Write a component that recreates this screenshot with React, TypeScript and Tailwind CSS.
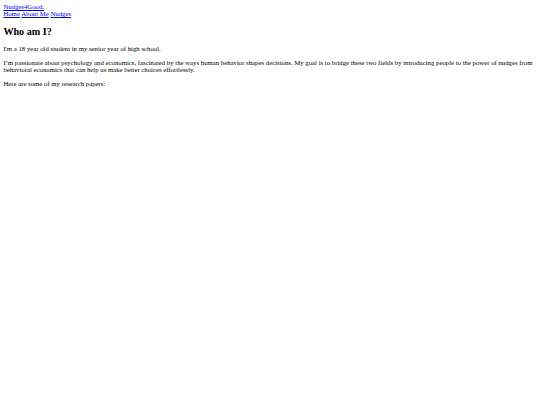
export default function App() {
  return (
    <div className="[zoom:0.421875] min-h-screen bg-white p-[8px] font-['Liberation_Serif','Times_New_Roman',serif] text-[16px] leading-[normal] text-black">
      {/* Header */}
      <header>
        <div>
          <a href="#" className="text-[#0000ee] underline">Nudges4Good.</a>
        </div>
        <nav>
          <a href="#" className="text-[#0000ee] underline">Home</a>{" "}
          <a href="#" className="text-[#0000ee] underline">About Me</a>{" "}
          <a href="#" className="text-[#0000ee] underline">Nudges</a>
        </nav>
      </header>

      <main>
        <section>
          <h1 className="my-[19.92px] text-[24px] font-bold">Who am I?</h1>
          <p className="my-[16px]">I'm a 18 year old student in my senior year of high school.</p>
          <p className="my-[16px]">
            I’m passionate about psychology and economics, fascinated by the ways human behavior shapes decisions.
            My goal is to bridge these two fields by introducing people to the power of nudges from behavioral
            economics that can help us make better choices effortlessly.
          </p>
          <p className="my-[16px]">Here are some of my research papers:</p>
        </section>
      </main>
    </div>
  );
}
